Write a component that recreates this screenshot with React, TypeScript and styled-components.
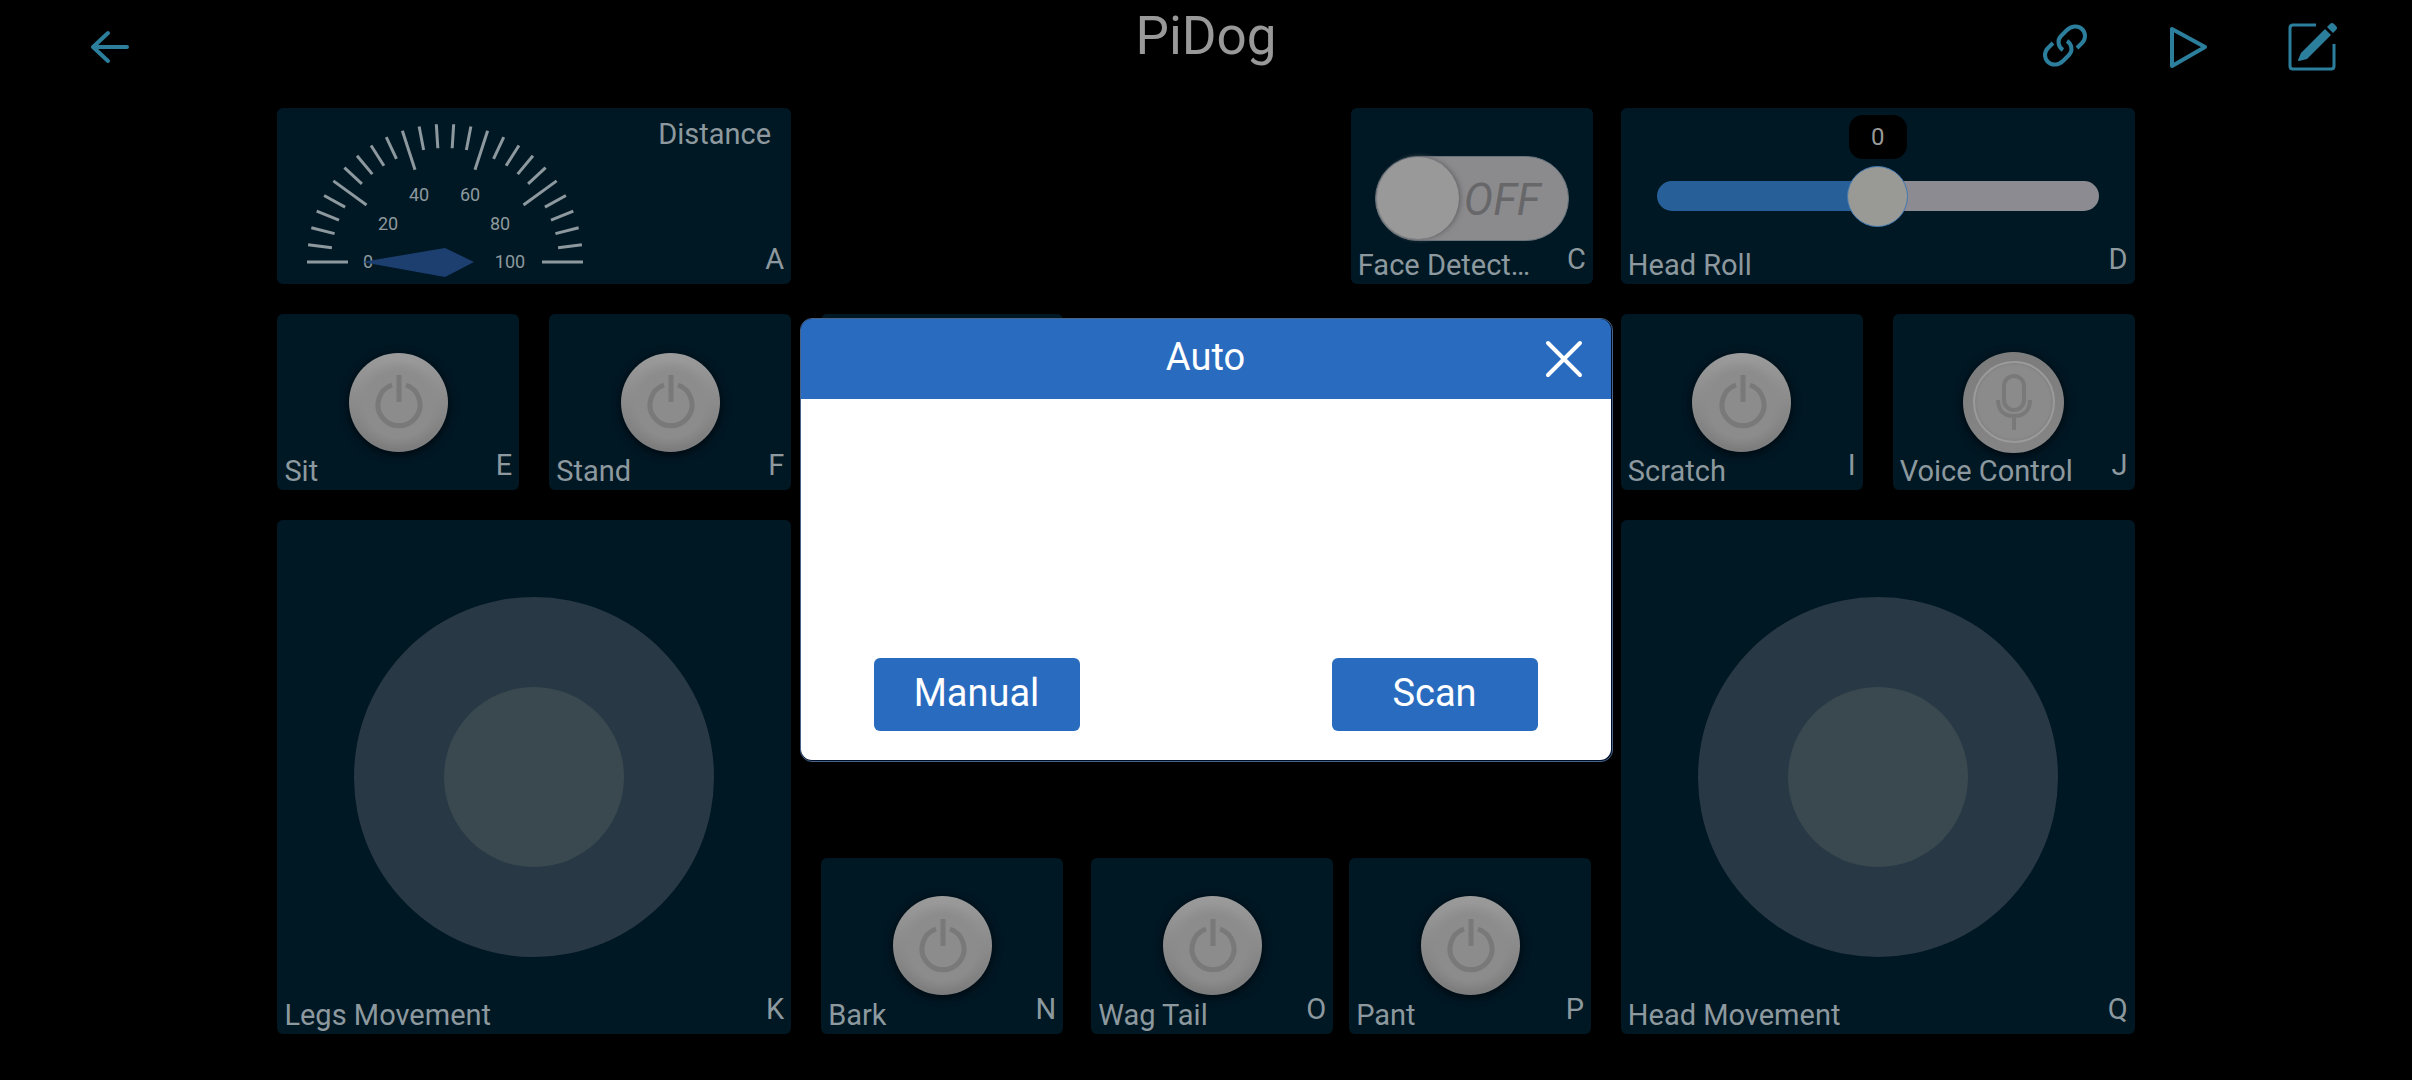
import React, { useState } from "react";
import styled, { createGlobalStyle } from "styled-components";

const GlobalStyle = createGlobalStyle`
  * { box-sizing: border-box; }
  body { margin: 0; background: #000; font-family: Roboto, "Liberation Sans", sans-serif; }
  button { font: inherit; padding: 0; border: 0; background: none; cursor: pointer; }
`;

const Page = styled.main`
  min-height: 100vh;
  background: #000;
  color: #8d999e;
`;

const Header = styled.header`
  display: grid;
  grid-template-columns: 1fr auto 1fr;
  height: 108px;
  padding: 0 72px;
`;

const Title = styled.h1`
  margin: 0;
  padding-top: 4px;
  font-size: 53px;
  line-height: 64px;
  font-weight: 400;
  color: #999;
`;

const Actions = styled.nav<{ $end?: boolean }>`
  display: flex;
  justify-content: ${(p) => (p.$end ? "flex-end" : "flex-start")};
  gap: 70px;
  padding: 20px 0 0 12px;
`;

const IconButton = styled.button`
  width: 54px;
  height: 54px;
  color: #2b7f9c;
  svg { display: block; }
`;

const Board = styled.div`
  display: grid;
  grid-template-columns: 514fr 774fr 514fr;
  column-gap: 28px;
  width: 77%;
  margin: 0 auto;
`;

const Column = styled.section<{ $middle?: boolean }>`
  display: flex;
  flex-direction: column;
  gap: 30px;
  min-width: 0;
  padding-left: ${(p) => (p.$middle ? "2px" : "0")};
`;

const Row = styled.div<{ $gap?: number; $bottom?: boolean }>`
  display: flex;
  gap: ${(p) => p.$gap ?? 30}px;
  padding-right: ${(p) => (p.$bottom ? "2px" : "0")};
  margin-top: ${(p) => (p.$bottom ? "auto" : "0")};
`;

const TileBox = styled.article<{ $square?: boolean; $third?: boolean; $end?: boolean }>`
  display: grid;
  flex: ${(p) => (p.$third ? "0 0 242px" : "1 1 0")};
  min-width: 0;
  margin-left: ${(p) => (p.$end ? "auto" : "0")};
  ${(p) => (p.$square ? "aspect-ratio: 1;" : "height: 176px;")}
  border-radius: 6px;
  background: #001824;
  > * { grid-area: 1 / 1; }
`;

const TileBody = styled.div<{ $low?: boolean }>`
  display: grid;
  place-items: center;
  padding-top: ${(p) => (p.$low ? "4px" : "0")};
`;

const TileFooter = styled.footer`
  display: flex;
  align-items: flex-end;
  justify-content: space-between;
  align-self: end;
  padding: 0 7px 1px;
  font-size: 29px;
  line-height: 36px;
`;

const TileId = styled.span`
  margin-left: auto;
  padding-bottom: 6px;
`;

const RoundButton = styled.button<{ $mic?: boolean }>`
  display: grid;
  place-items: center;
  width: ${(p) => (p.$mic ? 101 : 99)}px;
  height: ${(p) => (p.$mic ? 101 : 99)}px;
  border-radius: 50%;
  color: #797979;
  background: ${(p) =>
    p.$mic
      ? "linear-gradient(#7c7c7c, #858585)"
      : "radial-gradient(circle at 50% 52%, #8c8c8c 46%, transparent 62%), linear-gradient(#9b9b9b, #8c8c8c 45%, #7c7c7c)"};
  box-shadow: 0 2px 10px #00060c;
`;

const MicFace = styled.span`
  display: grid;
  place-items: center;
  width: 82px;
  height: 82px;
  border: 2px solid #9a9a9a;
  border-radius: 50%;
  background: #8b8b8b;
  box-shadow: inset 0 0 3px #777;
`;

const Stick = styled.div`
  display: grid;
  place-items: center;
  width: 70%;
  aspect-ratio: 1;
  border-radius: 50%;
  background: #283945;
`;

const StickKnob = styled.button`
  width: 50%;
  aspect-ratio: 1;
  border-radius: 50%;
  background: #3a4950;
`;

const GaugeBody = styled.div`
  display: flex;
  justify-content: space-between;
  align-items: flex-start;
  padding: 8px 20px 0 28px;
  font-size: 29px;
  line-height: 36px;
`;

const SwitchTrack = styled.label`
  display: flex;
  align-items: center;
  width: 194px;
  height: 85px;
  padding: 1px;
  border: 1px solid #68737b;
  border-radius: 43px;
  background: #8b8b8e;
  font-size: 44px;
  line-height: 52px;
  font-style: italic;
  color: #67676a;
  cursor: pointer;
`;

const SwitchInput = styled.input`
  appearance: none;
  width: 82px;
  height: 82px;
  margin: 0 5px 0 0;
  border-radius: 50%;
  background: #999;
  box-shadow: 2px 0 5px #66666a;
`;

const SwitchText = styled.span`
  padding-top: 4px;
`;

const SliderWrap = styled.div`
  position: relative;
  display: grid;
  width: 86%;
`;

const Slider = styled.input`
  appearance: none;
  width: 100%;
  height: 30px;
  margin: 0;
  border-radius: 15px;
  background: linear-gradient(90deg, #275f98 50%, #8b8b91 50%);
  &::-webkit-slider-thumb {
    appearance: none;
    width: 61px;
    height: 61px;
    border: 1px solid #4379b0;
    border-radius: 50%;
    background: #999996;
  }
`;

const Bubble = styled.output`
  position: absolute;
  left: 50%;
  bottom: 52px;
  width: 58px;
  transform: translateX(-50%);
  border-radius: 14px;
  background: #000;
  color: #999;
  font-size: 24px;
  line-height: 44px;
  text-align: center;
`;

const Overlay = styled.div`
  position: fixed;
  inset: 0;
  display: grid;
  place-items: center;
`;

const Dialog = styled.section`
  display: flex;
  flex-direction: column;
  width: 813px;
  height: 444px;
  padding: 0 1px 1px 0;
  border: 1px solid #486388;
  border-radius: 12px;
  background: #01102a;
`;

const DialogHead = styled.header`
  display: grid;
  grid-template-columns: 1fr auto 1fr;
  align-items: center;
  height: 80px;
  padding: 0 22px;
  border-radius: 11px 11px 0 0;
  background: #296cbf;
  color: #fff;
`;

const DialogTitle = styled.h2`
  grid-column: 2;
  margin: 0;
  padding-bottom: 4px;
  font-size: 38px;
  line-height: 48px;
  font-weight: 400;
`;

const CloseButton = styled.button`
  justify-self: end;
  width: 50px;
  height: 50px;
  color: #fff;
  svg { display: block; }
`;

const DialogBody = styled.div`
  display: flex;
  flex: 1;
  align-items: flex-end;
  justify-content: space-between;
  padding: 0 73px 29px;
  border-radius: 0 0 11px 11px;
  background: #fff;
`;

const DialogButton = styled.button`
  width: 206px;
  height: 73px;
  padding-bottom: 4px;
  border-radius: 6px;
  background: #296cbf;
  color: #fff;
  font-size: 38px;
  line-height: 48px;
`;

const PowerIcon = () => (
  <svg width="50" height="56" viewBox="0 0 50 56" fill="none" stroke="currentColor" strokeWidth="5" aria-hidden="true">
    <path d="M19 11A21 21 0 1 0 33 11" />
    <path d="M26 1v27" />
  </svg>
);

const MicIcon = () => (
  <svg width="36" height="56" viewBox="0 0 36 56" fill="none" stroke="currentColor" strokeWidth="4" aria-hidden="true">
    <rect x="8" y="2" width="20" height="34" rx="10" />
    <path d="M2 26c0 10 6 16 16 16s16-6 16-16M18 42v14" />
  </svg>
);

const scale = [
  { text: "0", x: 63, y: 145 },
  { text: "20", x: 83, y: 107 },
  { text: "40", x: 114, y: 78 },
  { text: "60", x: 165, y: 78 },
  { text: "80", x: 195, y: 107 },
  { text: "100", x: 205, y: 145 },
];

const Gauge = () => (
  <svg width="280" height="168" viewBox="0 0 280 168" role="img" aria-label="Distance gauge">
    <g stroke="#8d999e" strokeWidth="3">
      {Array.from({ length: 26 }, (_, i) => {
        const angle = (i * 7.2 * Math.PI) / 180;
        const inner = i % 5 === 0 ? 97 : 114;
        return (
          <line
            key={i}
            x1={140 - 138 * Math.cos(angle)}
            y1={146 - 138 * Math.sin(angle)}
            x2={140 - inner * Math.cos(angle)}
            y2={146 - inner * Math.sin(angle)}
          />
        );
      })}
    </g>
    <g fill="#8d999e" fontSize="18" textAnchor="middle" dominantBaseline="central">
      {scale.map((s) => (
        <text key={s.text} x={s.x} y={s.y}>{s.text}</text>
      ))}
    </g>
    <path d="M57 146 140 132 169 146 140 161Z" fill="#1c3f70" />
  </svg>
);

type TileProps = {
  id?: string;
  label?: string;
  square?: boolean;
  third?: boolean;
  end?: boolean;
  children?: React.ReactNode;
};

const Tile = ({ id, label, square, third, end, children }: TileProps) => (
  <TileBox $square={square} $third={third} $end={end}>
    {children}
    {id && (
      <TileFooter>
        {label && <span>{label}</span>}
        <TileId>{id}</TileId>
      </TileFooter>
    )}
  </TileBox>
);

const PowerTile = (props: TileProps) => (
  <Tile {...props}>
    <TileBody>
      <RoundButton aria-label={props.label}><PowerIcon /></RoundButton>
    </TileBody>
  </Tile>
);

const StickTile = (props: TileProps) => (
  <Tile {...props} square>
    <TileBody>
      <Stick><StickKnob aria-label={props.label} /></Stick>
    </TileBody>
  </Tile>
);

export default function App() {
  const [roll, setRoll] = useState(0);
  return (
    <Page>
      <GlobalStyle />
      <Header>
        <Actions>
          <IconButton aria-label="Back">
            <svg width="54" height="54" viewBox="0 0 54 54" fill="none" stroke="currentColor" strokeWidth="4" strokeLinecap="round" strokeLinejoin="round">
              <path d="M43 27H9M24 13 9 27l15 14" />
            </svg>
          </IconButton>
        </Actions>
        <Title>PiDog</Title>
        <Actions $end>
          <IconButton aria-label="Connect">
            <svg width="54" height="54" viewBox="0 0 54 54" fill="none" stroke="currentColor" strokeWidth="4">
              <path d="M25 30c-5-3-6-10-2-14l6-6c4-4 11-5 15-1s4 10 0 14l-5 5" />
              <path d="M25 30c-5-3-6-10-2-14l6-6c4-4 11-5 15-1s4 10 0 14l-5 5" transform="rotate(180 27 25.500)" />
            </svg>
          </IconButton>
          <IconButton aria-label="Run">
            <svg width="54" height="54" viewBox="0 0 54 54" fill="none" stroke="currentColor" strokeWidth="4" strokeLinejoin="round">
              <path d="M10 9v37l33-19Z" />
            </svg>
          </IconButton>
          <IconButton aria-label="Edit">
            <svg width="54" height="54" viewBox="0 0 54 54" fill="none" stroke="currentColor" strokeWidth="3">
              <path d="M30 5H7q-3 0-3 3v38q0 3 3 3h38q3 0 3-3V24" />
              <path d="M39 9l6 6-24 24-8 2q-1 0-1-1l3-7Z" fill="currentColor" stroke="none" />
              <path d="M41 7l3-3q2-2 4 0l2 2q2 2 0 4l-3 3Z" fill="currentColor" stroke="none" />
            </svg>
          </IconButton>
        </Actions>
      </Header>

      <Board>
        <Column>
          <Row>
            <Tile id="A">
              <GaugeBody>
                <Gauge />
                <span>Distance</span>
              </GaugeBody>
            </Tile>
          </Row>
          <Row>
            <PowerTile id="E" label="Sit" />
            <PowerTile id="F" label="Stand" />
          </Row>
          <StickTile id="K" label="Legs Movement" />
        </Column>

        <Column $middle>
          <Row>
            <Tile id="C" label="Face Detect…" third end>
              <TileBody $low>
                <SwitchTrack>
                  <SwitchInput type="checkbox" role="switch" aria-label="Face Detection" />
                  <SwitchText>OFF</SwitchText>
                </SwitchTrack>
              </TileBody>
            </Tile>
          </Row>
          <Row>
            <Tile third />
          </Row>
          <Row $gap={16} $bottom>
            <Row $gap={28}>
              <PowerTile id="N" label="Bark" third />
              <PowerTile id="O" label="Wag Tail" third />
            </Row>
            <PowerTile id="P" label="Pant" third />
          </Row>
        </Column>

        <Column>
          <Row>
            <Tile id="D" label="Head Roll">
              <TileBody>
                <SliderWrap>
                  <Slider
                    type="range"
                    min={-90}
                    max={90}
                    value={roll}
                    aria-label="Head Roll"
                    onChange={(e) => setRoll(Number(e.target.value))}
                  />
                  <Bubble>{roll}</Bubble>
                </SliderWrap>
              </TileBody>
            </Tile>
          </Row>
          <Row>
            <PowerTile id="I" label="Scratch" />
            <Tile id="J" label="Voice Control">
              <TileBody>
                <RoundButton $mic aria-label="Voice Control">
                  <MicFace><MicIcon /></MicFace>
                </RoundButton>
              </TileBody>
            </Tile>
          </Row>
          <StickTile id="Q" label="Head Movement" />
        </Column>
      </Board>

      <Overlay>
        <Dialog role="dialog" aria-labelledby="dialog-title">
          <DialogHead>
            <DialogTitle id="dialog-title">Auto</DialogTitle>
            <CloseButton aria-label="Close">
              <svg width="50" height="50" viewBox="0 0 50 50" fill="none" stroke="currentColor" strokeWidth="4" strokeLinecap="round">
                <path d="M9 9l32 32M41 9 9 41" />
              </svg>
            </CloseButton>
          </DialogHead>
          <DialogBody>
            <DialogButton>Manual</DialogButton>
            <DialogButton>Scan</DialogButton>
          </DialogBody>
        </Dialog>
      </Overlay>
    </Page>
  );
}
